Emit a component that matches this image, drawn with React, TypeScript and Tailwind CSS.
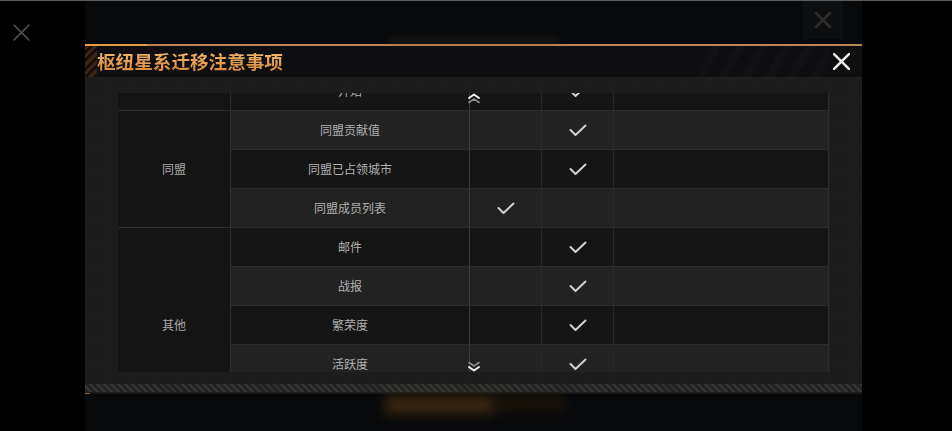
import React from "react";

type Row = { name: string; col: "a" | "b" | "" };
type Group = { title: string; rows: Row[] };

// scrolled list: the first group sits partly above the visible area
const groups: Group[] = [
  { title: "", rows: [{ name: "开始", col: "b" }] },
  {
    title: "同盟",
    rows: [
      { name: "同盟贡献值", col: "b" },
      { name: "同盟已占领城市", col: "b" },
      { name: "同盟成员列表", col: "a" },
    ],
  },
  {
    title: "其他",
    rows: [
      { name: "邮件", col: "b" },
      { name: "战报", col: "b" },
      { name: "繁荣度", col: "b" },
      { name: "活跃度", col: "b" },
      { name: "", col: "" },
    ],
  },
];

function Check() {
  return (
    <svg width="18" height="13" viewBox="0 0 18 13" fill="none">
      <polyline points="1.5,6 6.5,11 16.5,1.5" stroke="#d2d2d2" strokeWidth="2" strokeLinecap="round" strokeLinejoin="round" />
    </svg>
  );
}

function Chevrons({ up }: { up?: boolean }) {
  return (
    <svg width="14" height="11" viewBox="0 0 14 11" fill="none" className={up ? "" : "rotate-180"}>
      <polyline points="2,5 7,1.5 12,5" stroke="#f0f0f0" strokeWidth="2" strokeLinecap="round" strokeLinejoin="round" />
      <polyline points="2,9.5 7,6 12,9.5" stroke="#8a8a8a" strokeWidth="1.6" strokeLinecap="round" strokeLinejoin="round" />
    </svg>
  );
}

function XIcon({ size, color, stroke }: { size: number; color: string; stroke: number }) {
  return (
    <svg width={size} height={size} viewBox="0 0 16 16" fill="none">
      <line x1="1" y1="1" x2="15" y2="15" stroke={color} strokeWidth={stroke} strokeLinecap="round" />
      <line x1="15" y1="1" x2="1" y2="15" stroke={color} strokeWidth={stroke} strokeLinecap="round" />
    </svg>
  );
}

export default function App() {
  let idx = 0;
  return (
    <div className="w-[952px] h-[431px] bg-black overflow-hidden flex border-t border-[#5c5c5c] font-['Noto_Sans_CJK_SC','Noto_Sans',sans-serif]">
      {/* left strip with dim close */}
      <div className="w-[85px] shrink-0 pl-[13px] pt-[23px]">
        <XIcon size={17} color="#4e4e4e" stroke={1.5} />
      </div>

      {/* backdrop panel */}
      <div className="w-[777px] shrink-0 bg-[#08090b] flex flex-col">
        <div className="h-[43px] flex items-end justify-between pr-[19px]">
          <div className="ml-[305px] mb-[1px] w-[170px] h-[4px] bg-[#6a4a2a] blur-[3px] opacity-30" />
          <div className="self-start w-[40px] h-[38px] bg-[#0d0e10] flex items-center justify-center">
            <XIcon size={16} color="#2c2c2c" stroke={2.5} />
          </div>
        </div>

        {/* modal */}
        <div className="flex flex-col">
          <div className="h-[2px] bg-[#b98558] flex">
            <div className="w-[62px] h-full bg-[#e59a4e]" />
          </div>
          <div className="h-[31px] bg-[#0e0e10] flex items-center">
            <div className="w-[12px] h-full bg-[repeating-linear-gradient(135deg,#3a2414_0px,#3a2414_3px,#16100c_3px,#16100c_6px)]" />
            <span className="text-[18.6px] leading-none font-bold bg-gradient-to-b from-[#f2b568] to-[#d98b3e] bg-clip-text text-transparent">
              枢纽星系迁移注意事项
            </span>
            <div className="flex-1" />
            <div className="w-[130px] h-full bg-[repeating-linear-gradient(120deg,transparent_0px,transparent_12px,rgba(255,255,255,0.015)_12px,rgba(255,255,255,0.015)_20px)]" />
            <div className="pl-[4px] pr-[12px]">
              <XIcon size={17} color="#ececec" stroke={2.4} />
            </div>
          </div>

          {/* body */}
          <div className="h-[316px] bg-[#1c1c1c] px-[33px] pt-[16px] flex flex-col bg-[linear-gradient(#1f1f1f_1px,transparent_1px),linear-gradient(90deg,#1f1f1f_1px,transparent_1px)] bg-[size:24px_24px]">
            <div className="relative h-[279px] overflow-hidden">
              <div className="-mt-[21px] flex flex-col">
                {groups.map((g) => (
                  <div key={g.title + g.rows[0].name} className="flex">
                    <div className="w-[113px] shrink-0 bg-[#141414] border-r border-b border-[#2e2e2e] flex items-center justify-center text-[12px] text-[#a9a9a9]">
                      {g.title}
                    </div>
                    <div className="flex-1 flex flex-col">
                      {g.rows.map((r, i) => {
                        const light = idx++ % 2 === 1;
                        return (
                          <div
                            key={r.name + i}
                            className={`h-[39px] flex border-b border-[#2c2c2c] ${light ? "bg-[#222222]" : "bg-[#151515]"}`}
                          >
                            <div className="w-[239px] border-r border-[#3a3a3a] flex items-center justify-center text-[12px] text-[#b0b0b0]">
                              {r.name}
                            </div>
                            <div className="w-[72px] border-r border-[#272727] flex items-center justify-center">
                              {r.col === "a" && <Check />}
                            </div>
                            <div className="w-[72px] border-r border-[#272727] flex items-center justify-center">
                              {r.col === "b" && <Check />}
                            </div>
                            <div className="flex-1 border-r border-[#2c2c2c]" />
                          </div>
                        );
                      })}
                    </div>
                  </div>
                ))}
              </div>
              <div className="absolute left-[349px] top-[0px]">
                <Chevrons up />
              </div>
              <div className="absolute left-[349px] bottom-[0px]">
                <Chevrons />
              </div>
            </div>
            <div className="mt-[12px] -mx-[33px] h-[8px] bg-[repeating-linear-gradient(45deg,#232323_0px,#232323_3px,#353535_3px,#353535_5px)]" />
          </div>
          <div className="h-[1px] bg-[#151515] flex">
            <div className="w-[5px] h-full bg-[#8a5a30]" />
          </div>
        </div>

        <div className="flex-1 flex items-start pt-[2px]">
          <div className="ml-[300px] w-[110px] h-[18px] bg-[#4a3410] blur-[6px] opacity-70" />
          <div className="w-[70px] h-[14px] bg-[#241a0a] blur-[6px] opacity-70" />
        </div>
      </div>

      <div className="flex-1 bg-black" />
    </div>
  );
}
